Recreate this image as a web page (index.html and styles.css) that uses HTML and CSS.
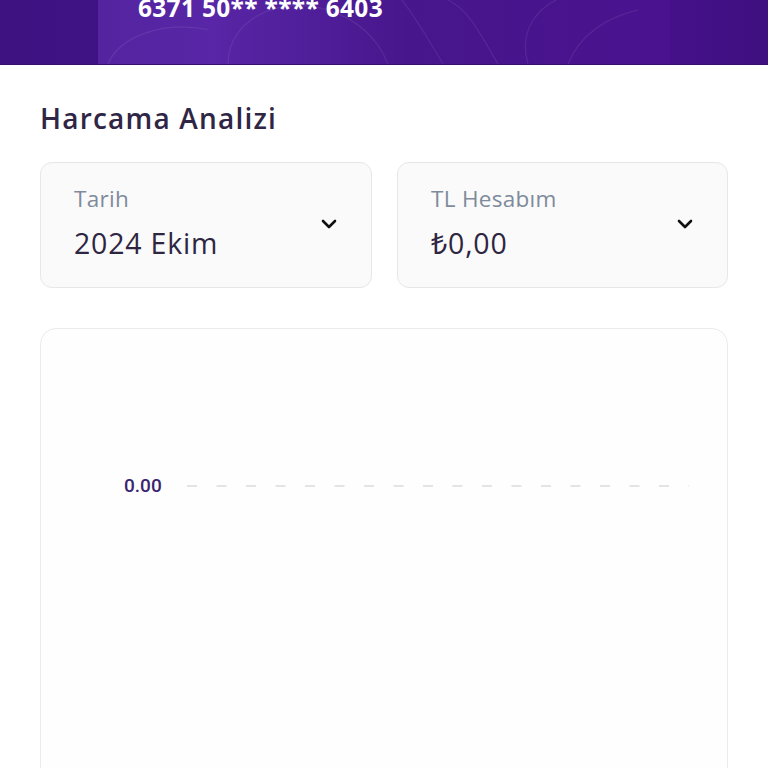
FILE: index.html
```html
<!DOCTYPE html>
<html lang="tr">
<head>
<meta charset="utf-8">
<link rel="stylesheet" href="styles.css">
</head>
<body>
<header class="hero">
  <div class="card-banner">
    <svg class="art" viewBox="0 0 572 65" preserveAspectRatio="none" aria-hidden="true">
      <path d="M130 65 C130 20 180 -5 230 10 C260 20 280 40 290 65" />
      <path d="M10 65 C20 40 60 20 110 30" />
      <path d="M300 -5 C320 20 330 40 345 65" />
      <path d="M350 0 C370 10 380 30 400 65" />
      <path d="M430 65 C420 30 440 5 470 -5" />
      <path d="M470 65 C480 40 500 20 540 10" />
    </svg>
    <span class="pan">6371 50** **** 6403</span>
  </div>
</header>
<main class="content">
  <h1 class="title">Harcama Analizi</h1>
  <div class="filters">
    <div class="select">
      <div class="select-text">
        <span class="label">Tarih</span>
        <span class="value">2024 Ekim</span>
      </div>
      <svg class="chev" viewBox="0 0 16 10"><path d="M2 2 L8 8 L14 2"/></svg>
    </div>
    <div class="select">
      <div class="select-text">
        <span class="label">TL Hesabım</span>
        <span class="value">₺0,00</span>
      </div>
      <svg class="chev" viewBox="0 0 16 10"><path d="M2 2 L8 8 L14 2"/></svg>
    </div>
  </div>
  <section class="chart">
    <div class="axis-row">
      <span class="axis-label">0.00</span>
      <svg class="dash" viewBox="0 0 502 4" preserveAspectRatio="none"><line x1="0" y1="2" x2="502" y2="2"/></svg>
    </div>
  </section>
</main>
</body>
</html>
```

FILE: styles.css
```css
* { box-sizing: border-box; }
html, body { margin: 0; padding: 0; background: #ffffff; }
body {
  font-family: "Open Sans", "Noto Sans", sans-serif;
  width: 768px;
  height: 768px;
  overflow: hidden;
}
.hero {
  height: 65px;
  background: linear-gradient(90deg, #3f1282 0%, #401384 13%, #45118a 87%, #3f1080 100%);
  border-bottom: 1px solid #3a0f70;
  padding: 0 98px;
}
.card-banner {
  position: relative;
  height: 64px;
  background: linear-gradient(90deg, #5424a0 0%, #5826a6 20%, #47168c 55%, #4a128f 100%);
  overflow: hidden;
}
.art {
  position: absolute;
  inset: 0;
  width: 100%;
  height: 100%;
  fill: none;
  stroke: rgba(255,255,255,0.08);
  stroke-width: 1.2;
}
.pan {
  position: relative;
  display: block;
  padding-left: 40px;
  margin-top: -7px;
  font-family: "Open Sans", sans-serif;
  font-weight: 700;
  font-size: 24.5px;
  line-height: 30px;
  color: #ffffff;
  letter-spacing: 0.3px;
}
.content {
  padding: 0 40px;
}
.title {
  margin: 35px 0 0;
  font-family: "Open Sans", sans-serif;
  font-weight: 600;
  font-size: 28px;
  line-height: 36px;
  color: #2f2645;
  letter-spacing: 1.2px;
}
.filters {
  display: grid;
  grid-template-columns: 332px 331px;
  gap: 25px;
  margin-top: 26px;
}
.select {
  height: 126px;
  border: 1.5px solid #e7e7ea;
  border-radius: 12px;
  background: #fafafb;
  display: flex;
  align-items: center;
  justify-content: space-between;
  padding: 0 34px 0 33px;
}
.select-text {
  display: flex;
  flex-direction: column;
  gap: 14px;
  margin-top: -4px;
}
.label {
  font-size: 22.5px;
  line-height: 26px;
  color: #7e8b9b;
  font-weight: 500;
  letter-spacing: 0.3px;
}
.value {
  font-size: 28.5px;
  line-height: 34px;
  color: #2e2641;
  letter-spacing: 0.8px;
}
.chev {
  width: 16px;
  height: 10px;
  fill: none;
  stroke: #111111;
  stroke-width: 2.6;
  stroke-linecap: round;
  stroke-linejoin: round;
  margin-bottom: 2px;
}
.chart {
  margin-top: 40px;
  height: 480px;
  border: 1.5px solid #ebebec;
  border-radius: 16px;
  background: #fefefe;
  padding: 147px 0 0 83px;
}
.axis-row {
  display: flex;
  align-items: center;
  gap: 25px;
}
.axis-label {
  font-family: "Roboto", sans-serif;
  font-weight: 500;
  font-size: 19px;
  line-height: 20px;
  color: #3b2570;
}
.dash {
  width: 502px;
  height: 4px;
  stroke: #dcdcde;
  stroke-width: 1.6;
  stroke-dasharray: 10 19.5;
}
```
